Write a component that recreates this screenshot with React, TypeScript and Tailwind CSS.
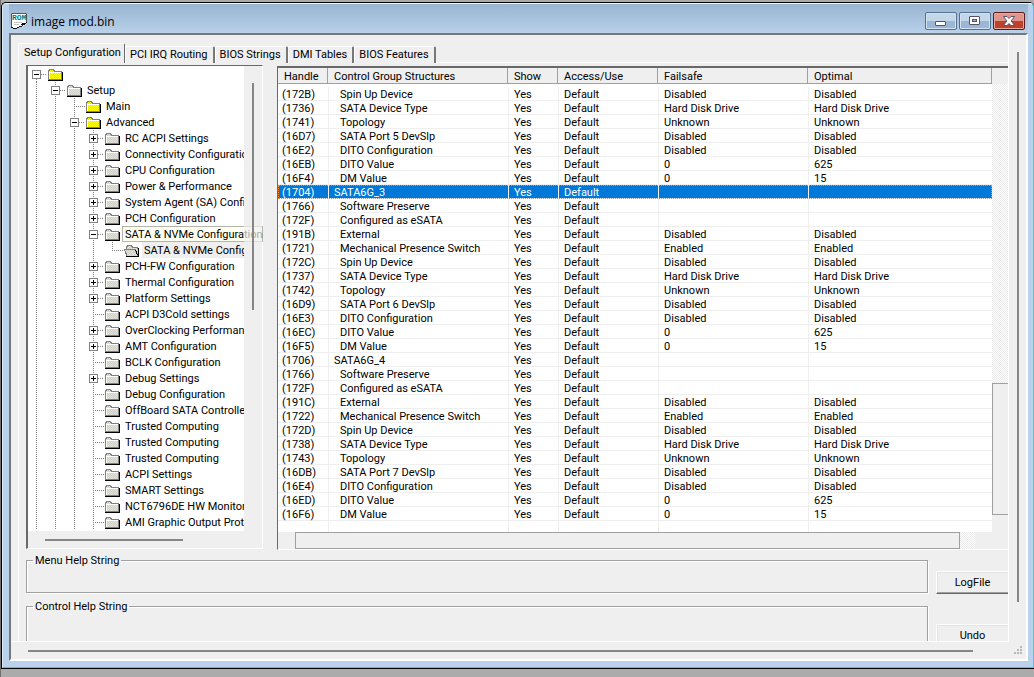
import { clsx } from "clsx";

type TreeItem = {
  label: string;
  level: number;
  state?: "open" | "closed";
  selected?: boolean;
  hovered?: boolean;
};

const tree: TreeItem[] = [
  { label: "", level: 0, state: "open" },
  { label: "Setup", level: 1, state: "open" },
  { label: "Main", level: 2 },
  { label: "Advanced", level: 2, state: "open" },
  { label: "RC ACPI Settings", level: 3, state: "closed" },
  { label: "Connectivity Configuration", level: 3, state: "closed" },
  { label: "CPU Configuration", level: 3, state: "closed" },
  { label: "Power & Performance", level: 3, state: "closed" },
  { label: "System Agent (SA) Config", level: 3, state: "closed" },
  { label: "PCH Configuration", level: 3, state: "closed" },
  { label: "SATA & NVMe Configuration", level: 3, state: "open", hovered: true },
  { label: "SATA & NVMe Configuration", level: 4, selected: true },
  { label: "PCH-FW Configuration", level: 3, state: "closed" },
  { label: "Thermal Configuration", level: 3, state: "closed" },
  { label: "Platform Settings", level: 3, state: "closed" },
  { label: "ACPI D3Cold settings", level: 3 },
  { label: "OverClocking Performance", level: 3, state: "closed" },
  { label: "AMT Configuration", level: 3, state: "closed" },
  { label: "BCLK Configuration", level: 3 },
  { label: "Debug Settings", level: 3, state: "closed" },
  { label: "Debug Configuration", level: 3 },
  { label: "OffBoard SATA Controller", level: 3 },
  { label: "Trusted Computing", level: 3 },
  { label: "Trusted Computing", level: 3 },
  { label: "Trusted Computing", level: 3 },
  { label: "ACPI Settings", level: 3 },
  { label: "SMART Settings", level: 3 },
  { label: "NCT6796DE HW Monitor", level: 3 },
  { label: "AMI Graphic Output Protocol", level: 3 },
];

type Row = { handle: string; name: string; group?: boolean; failsafe?: string; optimal?: string };

const row = (handle: string, name: string, failsafe = "", optimal = failsafe): Row => ({
  handle,
  name,
  failsafe,
  optimal,
});

const rows: Row[] = [
  row("(172B)", "Spin Up Device", "Disabled"),
  row("(1736)", "SATA Device Type", "Hard Disk Drive"),
  row("(1741)", "Topology", "Unknown"),
  row("(16D7)", "SATA Port 5 DevSlp", "Disabled"),
  row("(16E2)", "DITO Configuration", "Disabled"),
  row("(16EB)", "DITO Value", "0", "625"),
  row("(16F4)", "DM Value", "0", "15"),
  { handle: "(1704)", name: "SATA6G_3", group: true },
  row("(1766)", "Software Preserve"),
  row("(172F)", "Configured as eSATA"),
  row("(191B)", "External", "Disabled"),
  row("(1721)", "Mechanical Presence Switch", "Enabled"),
  row("(172C)", "Spin Up Device", "Disabled"),
  row("(1737)", "SATA Device Type", "Hard Disk Drive"),
  row("(1742)", "Topology", "Unknown"),
  row("(16D9)", "SATA Port 6 DevSlp", "Disabled"),
  row("(16E3)", "DITO Configuration", "Disabled"),
  row("(16EC)", "DITO Value", "0", "625"),
  row("(16F5)", "DM Value", "0", "15"),
  { handle: "(1706)", name: "SATA6G_4", group: true },
  row("(1766)", "Software Preserve"),
  row("(172F)", "Configured as eSATA"),
  row("(191C)", "External", "Disabled"),
  row("(1722)", "Mechanical Presence Switch", "Enabled"),
  row("(172D)", "Spin Up Device", "Disabled"),
  row("(1738)", "SATA Device Type", "Hard Disk Drive"),
  row("(1743)", "Topology", "Unknown"),
  row("(16DB)", "SATA Port 7 DevSlp", "Disabled"),
  row("(16E4)", "DITO Configuration", "Disabled"),
  row("(16ED)", "DITO Value", "0", "625"),
  row("(16F6)", "DM Value", "0", "15"),
];

const tabs = ["Setup Configuration", "PCI IRQ Routing", "BIOS Strings", "DMI Tables", "BIOS Features"];
const columns = ["Handle", "Control Group Structures", "Show", "Access/Use", "Failsafe", "Optimal"];

function RomIcon() {
  return (
    <svg width="17" height="16" viewBox="0 0 17 16" className="shrink-0" aria-hidden="true">
      <path d="M0 0h16v10l-5 4H7l-1 1H2l-2-1z" fill="#fff" />
      <path d="M.5 14V.5h15V10" fill="none" stroke="#555" />
      <path d="M0 14.5h2M2 15.5h4M6 14.5h2M8 13.5h3M11 12.5h1M12 11.5h2M14 10.5h1M15 9.5h1M10 11.5h2M11 10.5h3" stroke="#111" shapeRendering="crispEdges" />
      <path d="M3 9.5h8M3 11.5h5" stroke="#c8c8c8" />
      <text x="1" y="7" fontSize="8" fontWeight="700" fontFamily="Liberation Mono, monospace" fill="#008080">
        ROM
      </text>
    </svg>
  );
}

function FolderIcon({ open }: { open?: boolean }) {
  return (
    <svg width="17" height="16" viewBox="0 0 17 16" className="shrink-0" shapeRendering="crispEdges" aria-hidden="true">
      <defs>
        <pattern id={open ? "dither-open" : "dither"} x={open ? 0 : 1} width="2" height="2" patternUnits="userSpaceOnUse">
          <rect width="2" height="2" fill="#d0d0c8" />
          <rect width="1" height="1" fill="#ffff00" />
          <rect x="1" y="1" width="1" height="1" fill="#ffff00" />
        </pattern>
      </defs>
      {open ? (
        <>
          <path d="M3 13V5h1V4h1V3h4v1h1v1h5v8z" fill="url(#dither-open)" />
          <path d="M3.500 7V4.500h1v-1h4v1h1v1h5V7" fill="none" stroke="#808080" />
          <path d="M1 8h11l3 6H4z" fill="url(#dither-open)" />
          <path d="M4 14L1.500 7.500H12l3 6" fill="none" stroke="#808080" />
          <path d="M3 14.500h13M15.500 6v9M12.500 8l2 5" stroke="#000" fill="none" />
        </>
      ) : (
        <>
          <path d="M1 4h1V3h5v1h1v1h6v9H1z" fill="url(#dither)" />
          <path d="M1.500 14V4.500h1v-1h4v1h1v1h7" fill="none" stroke="#808080" />
          <path d="M2.500 13V6.500H14" fill="none" stroke="#fff" />
          <path d="M1 14.500h15M15.500 6v9" stroke="#000" />
          <path d="M14.500 6v8M2 13.500h13" stroke="#808080" />
        </>
      )}
    </svg>
  );
}

// One 19px column of the dotted connector lines
function Guide({ kind }: { kind: "line" | "tee" | "elbow" }) {
  return (
    <svg width="19" height="16" viewBox="0 0 19 16" className="shrink-0" shapeRendering="crispEdges" aria-hidden="true">
      <g stroke="#808080" strokeDasharray="1 1">
        <path d={kind === "elbow" ? "M8.500 0v8" : "M8.500 0v16"} />
        {kind !== "line" && <path d="M8 8.500h11" />}
      </g>
    </svg>
  );
}

function Expander({ item }: { item: TreeItem }) {
  const open = item.state === "open";
  return (
    <button type="button" aria-label={open ? "Collapse" : "Expand"} className="h-4 w-[19px] shrink-0">
      <svg width="19" height="16" viewBox="0 0 19 16" shapeRendering="crispEdges" aria-hidden="true">
        <path d={item.level === 0 ? "M8.500 13v3" : "M8.500 0v16"} stroke="#808080" strokeDasharray="1 1" />
        <path d="M13 8.500h6" stroke="#808080" strokeDasharray="1 1" />
        <rect x="4.500" y="4.500" width="8" height="8" fill="#fff" stroke="#808080" />
        <path d={open ? "M6 8.500h5" : "M6 8.500h5M8.500 6v5"} stroke="#000" />
      </svg>
    </button>
  );
}

function TreeRow({ item }: { item: TreeItem }) {
  return (
    <li className="flex h-4">
      {Array.from({ length: item.level }, (_, i) => (
        <Guide key={i} kind="line" />
      ))}
      {item.state ? <Expander item={item} /> : <Guide kind={item.level === 4 ? "elbow" : "tee"} />}
      <FolderIcon open={item.selected} />
      <span className={clsx("relative min-w-0 flex-1", !item.hovered && "overflow-hidden")}>
        {item.hovered && (
          <span className="absolute top-0 left-px h-4 w-[141px] border border-[#b4b4ac] bg-[#fffff0]" />
        )}
        <span
          className={clsx(
            "relative ml-[2px] block h-4 px-[2px] leading-[18px] whitespace-nowrap",
            item.selected && "bg-[#efefef]"
          )}
        >
          {item.label}
        </span>
      </span>
    </li>
  );
}

function SetupTree() {
  return (
    <div className="flex w-[237px] shrink-0 flex-col border-t border-r border-b border-l-2 border-t-[#696969] border-r-white border-b-white border-l-[#696969] bg-[#efefef]">
      <div className="flex">
        <ul className="w-[216px] bg-white pb-px">
          {tree.map((item, i) => (
            <TreeRow key={i} item={item} />
          ))}
        </ul>
        <div className="relative flex flex-1 justify-center bg-[#efefef]/70 pt-[17px]">
          <div className="h-[227px] w-[2px] bg-[#868686]" />
        </div>
      </div>
      <div className="flex h-[17px] items-center pl-[17px]">
        <div className="h-[2px] w-[138px] bg-[#868686]" />
      </div>
    </div>
  );
}

const dither = "bg-[repeating-conic-gradient(#ffffff_0_25%,#e9e9e9_0_50%)] bg-[length:2px_2px]";

function ControlTable() {
  return (
    <div className="mt-px flex min-w-0 flex-1 flex-col border-t-2 border-b border-l border-t-[#696969] border-b-white border-l-[#696969] bg-[#efefef]">
      <div className="flex">
        <div className="min-w-0 flex-1 bg-white">
          <table className="w-full table-fixed border-separate border-spacing-0 text-left">
            <colgroup>
              <col className="w-[50px]" />
              <col className="w-[180px]" />
              <col className="w-[50px]" />
              <col className="w-[100px]" />
              <col className="w-[150px]" />
              <col />
            </colgroup>
            <thead>
              <tr>
                {columns.map((name) => (
                  <th key={name} className="h-[19px] p-0 align-top font-normal">
                    <div className="h-4 border-r border-b border-[#a0a0a0] bg-[#efefef] pl-[6px] leading-[18px] whitespace-nowrap">
                      {name}
                    </div>
                  </th>
                ))}
              </tr>
            </thead>
            <tbody>
              {rows.map((r) => {
                const selected = r.handle === "(1704)";
                return (
                  <tr
                    key={r.handle + r.name + r.failsafe}
                    className={clsx(
                      "h-[14px] leading-[11px] whitespace-nowrap [&>td]:h-[14px] [&>td]:border-b [&>td]:border-[#efefef] [&>td]:p-0 [&>td]:pt-[2px] [&>td+td]:border-l",
                      selected && "bg-[#0078d7] text-white outline-1 -outline-offset-1 outline-[#ff8728] outline-dotted"
                    )}
                  >
                    <td>
                      <span className="block pl-1">{r.handle}</span>
                    </td>
                    <td>
                      <span className={clsx("block", r.group ? "pl-[5px]" : "pl-[11px]")}>{r.name}</span>
                    </td>
                    <td>
                      <span className="block pl-[5px]">Yes</span>
                    </td>
                    <td>
                      <span className="block pl-[5px]">Default</span>
                    </td>
                    <td>
                      <span className="block pl-[5px]">{r.failsafe}</span>
                    </td>
                    <td>
                      <span className="block pl-[5px]">{r.optimal}</span>
                    </td>
                  </tr>
                );
              })}
              <tr className="[&>td]:h-[11px] [&>td]:border-[#efefef] [&>td]:p-0 [&>td+td]:border-l">
                {columns.map((name) => (
                  <td key={name} />
                ))}
              </tr>
            </tbody>
          </table>
        </div>
        <div className="flex w-4 flex-col pt-4">
          <div className={clsx("flex-1", dither)} />
          <div className="h-[132px] border-t border-b border-l border-[#a0a0a0]" />
          <div className="h-[17px]" />
        </div>
      </div>
      <div className="flex h-[17px] pr-[33px] pl-[17px]">
        <div className="flex-1 border border-[#a0a0a0]" />
        <div className={clsx("w-[15px]", dither)} />
      </div>
    </div>
  );
}

function TabBar() {
  return (
    <div role="tablist" className="flex items-end pl-[7px]">
      {tabs.map((name, i) => (
        <button
          key={name}
          type="button"
          role="tab"
          aria-selected={i === 0}
          className={clsx(
            "rounded-t-[2px] border-t border-l border-t-white border-l-white bg-[#efefef] leading-[14px] whitespace-nowrap",
            i === 0
              ? "relative h-[20px] w-[107px] border-r border-r-[#696969] pb-px pl-[2px]"
              : "h-[17px] border-r-2 border-r-[#787878] pr-[5px] pl-1"
          )}
        >
          {name}
        </button>
      ))}
    </div>
  );
}

const captionButton =
  "flex h-[18px] w-8 items-center justify-center rounded-[2px] border border-[#56708f] bg-linear-to-b from-[#c3d6ea] from-50% to-[#9bb7d5] to-50% shadow-[inset_0_0_0_1px_#d3e2f1]";

function TitleBar() {
  return (
    <header className="flex h-[29px] items-center bg-linear-to-b from-[#99b4d1] to-[#b9d1ea] pt-[5px] pr-[3px] pl-[2px]">
      <RomIcon />
      <h1 className="ml-[3px] flex-1 pt-px font-['Open_Sans','Noto_Sans',sans-serif] text-[12px] leading-4 text-black">
        image mod.bin
      </h1>
      <div className="flex gap-[2px]">
        <button type="button" aria-label="Minimize" className={captionButton}>
          <svg width="12" height="12" viewBox="0 0 12 12" aria-hidden="true">
            <rect x="0.500" y="6.500" width="10" height="4" rx="0.500" fill="#fff" stroke="#545468" />
          </svg>
        </button>
        <button type="button" aria-label="Maximize" className={captionButton}>
          <svg width="12" height="12" viewBox="0 0 12 12" aria-hidden="true">
            <rect x="0.500" y="1.500" width="10" height="8" rx="0.500" fill="#fff" stroke="#545468" />
            <rect x="3.500" y="4.500" width="4" height="2" fill="#9bb7d5" stroke="#545468" />
          </svg>
        </button>
        <button
          type="button"
          aria-label="Close"
          className="flex h-[18px] w-8 items-center justify-center rounded-[2px] border border-[#5c1a1c] bg-linear-to-b from-[#e0958a] from-50% to-[#bd4229] to-50% shadow-[inset_0_0_0_1px_#e6a79c]"
        >
          <svg width="12" height="10" viewBox="0 0 12 10" aria-hidden="true">
            <path d="M.5.5h3.500L6 2.500 8 .5h3.500L8.200 5l3.300 4.500H8L6 7.500l-2 2H.5L3.800 5z" fill="#fff" stroke="#545468" />
          </svg>
        </button>
      </div>
    </header>
  );
}

function HelpBox({ title, cut }: { title: string; cut?: boolean }) {
  return (
    <fieldset
      className={clsx(
        "border-t border-r border-l border-[#a0a0a0] pl-[6px] shadow-[1px_1px_0_#fff,inset_1px_1px_0_#fff]",
        cut ? "h-[42px]" : "h-10 border-b"
      )}
    >
      <legend className="px-[2px] pt-px leading-[14px]">{title}</legend>
    </fieldset>
  );
}

export default function App() {
  return (
    <div className="flex min-h-screen flex-col border-l border-[#6e6e6e] bg-[#ababab] pt-[2px] pb-[9px] font-[Roboto,'Liberation_Sans',sans-serif] text-[11px] text-black">
      <div className="flex flex-1 flex-col rounded-t-[5px] border-t border-b border-l border-black bg-black">
        <div className="flex flex-1 flex-col rounded-t-[4px] border border-t-[#eef4fa] border-r-[#38cfe0] border-b-[#38cfe0] border-l-[#dce9f5] bg-[#b9d1ea] pr-[5px] pb-[6px] pl-[6px]">
          <TitleBar />
          <div className="flex flex-1 flex-col border-t-2 border-r-2 border-b-2 border-l-2 border-t-[#787878] border-r-white border-b-white border-l-[#787878] bg-[#efefef]">
            <div className="flex flex-1">
              <main className="min-w-0 flex-1 border-r border-b border-white pt-2">
                <TabBar />
                <div className="-mt-px ml-[7px] border-t border-l border-white pt-[2px] pl-[7px]">
                  <div className="flex items-start gap-[14px]">
                    <SetupTree />
                    <ControlTable />
                  </div>
                  <div className="mt-[3px] flex gap-2">
                    <div className="flex min-w-0 flex-1 flex-col gap-[6px]">
                      <HelpBox title="Menu Help String" />
                      <HelpBox title="Control Help String" cut />
                    </div>
                    <div className="flex w-[72px] flex-col justify-between pt-[18px]">
                      <button
                        type="button"
                        className="h-[23px] border-t border-b border-l border-t-white border-b-[#696969] border-l-white pt-px shadow-[inset_0_-1px_0_#a0a0a0,inset_1px_1px_0_#e3e3e3]"
                      >
                        LogFile
                      </button>
                      <button
                        type="button"
                        className="h-[17px] border-t border-l border-white pt-[4px] leading-[14px] shadow-[inset_1px_1px_0_#e3e3e3]"
                      >
                        Undo
                      </button>
                    </div>
                  </div>
                </div>
              </main>
              <div className="flex w-[17px] justify-center pt-[17px] pb-10">
                <div className="w-[2px] bg-[#868686]" />
              </div>
            </div>
            <div className="flex h-[17px] items-center pr-[3px] pl-[17px]">
              <div className="h-[2px] flex-1 bg-[#868686]" />
              <svg width="9" height="9" viewBox="0 0 9 9" className="ml-[41px]" fill="#b8b8b8" shapeRendering="crispEdges" aria-hidden="true">
                <path d="M6 0h2v2H6zM3 3h2v2H3zM6 3h2v2H6zM0 6h2v2H0zM3 6h2v2H3zM6 6h2v2H6z" />
              </svg>
            </div>
          </div>
        </div>
      </div>
    </div>
  );
}
